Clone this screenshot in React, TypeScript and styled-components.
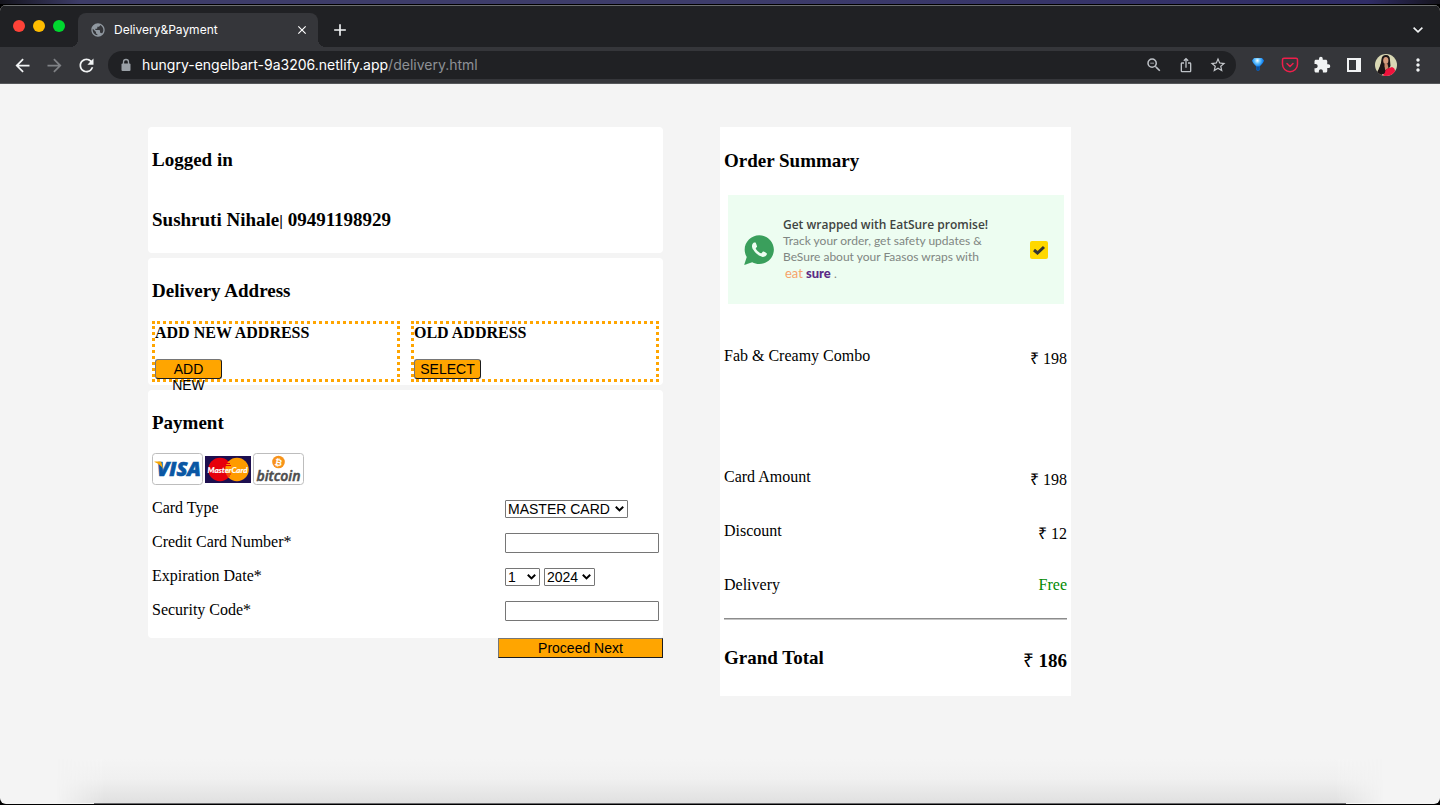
import React from "react";
import styled, { createGlobalStyle } from "styled-components";
import {
  MdAdd, MdArrowBack, MdArrowForward, MdClose, MdExtension,
  MdMoreVert, MdPublic, MdRefresh, MdStarBorder, MdZoomOut, MdIosShare,
} from "react-icons/md";
import { IoLogoWhatsapp } from "react-icons/io";
import { Pocket } from "lucide-react";

const GlobalStyle = createGlobalStyle`
  * { box-sizing: border-box; }
  body { margin: 0; background: #000; }
  h2, h3, p, dl, dd, dt { margin: 0; }
  button, input, select { margin: 0; font-family: "Liberation Sans", Arial, sans-serif; }
`;

const Desktop = styled.div`
  min-height: 100vh;
  display: flex;
  flex-direction: column;
  background: #000;
  font-family: "Liberation Serif", "Times New Roman", serif;
  font-size: 16px;
  color: #000;
`;

const Wallpaper = styled.div`
  height: 4px;
  margin-bottom: 1px;
  background: linear-gradient(90deg, #14141c 0, #3d3c68 80px, #3d3c6a 50%, #2f2c66 95%, #15141c 100%);
`;

const BrowserWindow = styled.div`
  flex: 1;
  display: flex;
  flex-direction: column;
  margin-bottom: 1px;
  border-radius: 6px;
  overflow: hidden;
  background: #f4f4f4;
`;

const TabBar = styled.div`
  height: 42px;
  display: flex;
  align-items: flex-end;
  padding: 0 6px 0 13px;
  border-top: 1px solid #6d6f70;
  background: #202124;
`;

const Lights = styled.div`
  display: flex;
  gap: 8px;
  margin-right: 13px;
  padding-bottom: 15px;
`;

const Light = styled.span<{ $color: string }>`
  width: 12px;
  height: 12px;
  border-radius: 50%;
  background: ${(p) => p.$color};
`;

const Tab = styled.div`
  position: relative;
  width: 240px;
  height: 34px;
  display: flex;
  align-items: center;
  gap: 8px;
  padding: 0 8px 0 12px;
  border-radius: 8px 8px 0 0;
  background: #35363a;
  color: #fff;
  font: 12px/16px Inter, sans-serif;

  &::before,
  &::after {
    content: "";
    position: absolute;
    bottom: 0;
    width: 8px;
    height: 8px;
  }
  &::before { left: -8px; background: radial-gradient(circle at 0 0, transparent 8px, #35363a 8px); }
  &::after { right: -8px; background: radial-gradient(circle at 100% 0, transparent 8px, #35363a 8px); }
`;

const TabTitle = styled.span`
  flex: 1;
`;

const TabButton = styled.button`
  width: 16px;
  height: 16px;
  display: flex;
  align-items: center;
  justify-content: center;
  padding: 0;
  border: 0;
  background: none;
  color: #fff;
`;

const BarButton = styled.button<{ $color?: string }>`
  width: 32px;
  height: 34px;
  display: flex;
  align-items: center;
  justify-content: center;
  flex: none;
  padding: 0;
  border: 0;
  background: none;
  color: ${(p) => p.$color ?? "#f1f3f4"};
`;

const NewTab = styled(BarButton)`
  margin: 0 auto 0 6px;
`;

const Toolbar = styled.div`
  height: 37px;
  display: flex;
  align-items: center;
  padding: 0 6px;
  border-bottom: 1px solid #55575a;
  background: #35363a;
`;

const Omnibox = styled.div`
  flex: 1;
  height: 28px;
  display: flex;
  align-items: center;
  margin: 0 6px;
  padding: 0 2px 0 12px;
  border-radius: 14px;
  background: #202124;
  color: #9aa0a6;
`;

const Address = styled.div`
  flex: 1;
  margin-left: 10px;
  font: 14px/20px Inter, sans-serif;
  color: #8e9196;

  b { font-weight: 400; color: #fff; }
`;

const Page = styled.main`
  flex: 1;
  display: grid;
  grid-template-columns: 515fr 351fr;
  align-items: start;
  gap: 57px;
  padding: 43px 369px 0 148px;
`;

const Dock = styled.div`
  height: 44px;
  margin: 0 56px;
  background: linear-gradient(180deg, #f4f4f4 0, #f0f0f0 45%, #e0e0e0 100%);
  mask-image: linear-gradient(90deg, transparent 0, #000 48px, #000 calc(100% - 48px), transparent 100%);
`;

const DockEdge = styled.div`
  height: 1px;
  margin: 0 94px;
  background: #6b6b6e;
`;

const Column = styled.form`
  display: flex;
  flex-direction: column;
  gap: 5px;
`;

const Panel = styled.section<{ $bottom: number }>`
  position: relative;
  padding: 22px 4px ${(p) => p.$bottom}px;
  border-radius: 4px;
  background: #fff;
`;

const Title = styled.h2`
  font-size: 19px;
  line-height: 22px;
  font-weight: 700;
`;

const Identity = styled(Title)`
  margin-top: 38px;
  span { font: 14px/16px "Liberation Sans", Arial, sans-serif; }
`;

const AddressGrid = styled.div`
  display: grid;
  grid-template-columns: 1fr 1fr;
  gap: 11px;
  margin-top: 19px;
`;

const AddressBox = styled.div`
  border: 3px dotted orange;
`;

const AddressHeading = styled.h3`
  margin-bottom: 17px;
  font-size: 16px;
  line-height: 18px;
`;

const ActionButton = styled.button`
  display: block;
  width: 67px;
  height: 20px;
  padding: 1px 4px;
  border: 1px solid;
  border-color: #767676 #1c1c1c #1c1c1c #767676;
  border-radius: 3px;
  background: orange;
  color: #000;
  font-size: 14px;
  line-height: 16px;
`;

const ProceedButton = styled(ActionButton)`
  width: 165px;
  margin: -5px 0 0 auto;
  border-radius: 0;
`;

const Cards = styled.div`
  display: flex;
  align-items: center;
  gap: 2px;
  margin: 19px 0 7px;
  svg { display: block; }
`;

const Field = styled.div`
  display: grid;
  grid-template-columns: 1fr 154px;
  align-items: center;
  height: 34px;
`;

const Label = styled.label`
  line-height: 18px;
  padding-bottom: 2px;
`;

const Controls = styled.div`
  display: flex;
  gap: 4px;
`;

const TextInput = styled.input`
  width: 100%;
  height: 20px;
  border: 1px solid #767676;
  border-radius: 1px;
  background: #fff;
`;

const SelectWrap = styled.span<{ $width: number }>`
  position: relative;
  width: ${(p) => p.$width}px;
  height: 18px;

  svg { position: absolute; right: 4px; top: 6px; pointer-events: none; }
`;

const Select = styled.select`
  appearance: none;
  display: block;
  width: 100%;
  height: 18px;
  padding: 0 2px;
  border: 1px solid #767676;
  border-radius: 1px;
  background: #fff;
  color: #000;
  font-size: 14px;
  line-height: 16px;
`;

const Summary = styled.section`
  padding: 23px 4px 21px;
  background: #fff;
`;

const Banner = styled.div`
  height: 109px;
  display: flex;
  align-items: center;
  margin: 23px 3px 43px 4px;
  padding: 0 16px 0 14px;
  background: #edfdf1;
  font-family: Lato, sans-serif;
  font-size: 12px;
  line-height: 16px;
  color: #808682;
`;

const BannerText = styled.label`
  flex: 1;
  margin-left: 7px;
  white-space: nowrap;

  strong { display: block; font: 600 12px/16px "Open Sans", sans-serif; color: #3f4441; }
`;

const Eat = styled.span`
  padding-left: 2px;
  font-size: 13px;
  color: #f7a26a;
`;

const Sure = styled.b`
  font-size: 13px;
  font-weight: 900;
  color: #5b2a86;
`;

const CheckWrap = styled.span`
  display: grid;
  > * { grid-area: 1 / 1; }
  svg { pointer-events: none; }
`;

const Check = styled.input`
  appearance: none;
  width: 18px;
  height: 18px;
  margin: 0;
  border-radius: 2px;
  background: #ffd800;
`;

const Line = styled.div<{ $top: number }>`
  display: flex;
  justify-content: space-between;
  margin-top: ${(p) => p.$top}px;
  line-height: 18px;

  dd { line-height: 24px; }
`;

const Free = styled.dd`
  && { line-height: 18px; padding-bottom: 4px; color: #008a00; }
`;

const Rule = styled.hr`
  height: 2px;
  margin: 20px 0 27px;
  border: 0;
  border-top: 1px solid #8c8c8c;
  border-bottom: 1px solid #c4c4c4;
`;

const Total = styled(Line)`
  font-size: 19px;
  font-weight: 700;
  line-height: 22px;

  dd { line-height: 28px; }
`;

const Rupee = styled.span`
  font-weight: 400;
`;

const Chevron = () => (
  <svg width="9" height="6" viewBox="0 0 9 6" fill="none" stroke="#000" strokeWidth="2">
    <path d="M.8 .8 4.5 4.4 8.2 .8" />
  </svg>
);

const LockIcon = () => (
  <svg width="12" height="14" viewBox="0 0 12 14">
    <path d="M3.500 6V4a2.500 2.500 0 0 1 5 0v2" fill="none" stroke="currentColor" strokeWidth="1.300" />
    <rect x="1.500" y="5.500" width="9" height="7.500" rx="1" fill="currentColor" />
  </svg>
);

const PinIcon = () => (
  <svg width="14" height="16" viewBox="0 0 14 16">
    <defs>
      <radialGradient id="gem" cx=".45" cy=".2" r=".6">
        <stop offset="0" stopColor="#fff" />
        <stop offset=".35" stopColor="#6cc8ff" />
        <stop offset=".8" stopColor="#0a7cf0" />
      </radialGradient>
    </defs>
    <path d="M1 3.500 3 1h8l2 2.500Q12.500 6 8.600 9.500V13L7 14l-1.600-1V9.500Q1.500 6 1 3.500Z" fill="url(#gem)" />
    <path d="M5.400 9.500h3.200V13L7 14l-1.600-1Z" fill="#0a4f9c" />
  </svg>
);

const AvatarIcon = () => (
  <svg width="22" height="22" viewBox="0 0 22 22">
    <clipPath id="face"><circle cx="11" cy="11" r="11" /></clipPath>
    <g clipPath="url(#face)">
      <rect width="22" height="22" fill="#d9d8b4" />
      <path d="M6.500 5Q7 1 11 1t4 5l.5 6-4 6-7 4-3-3Q6 12 6.500 5Z" fill="#1d1516" />
      <ellipse cx="10.800" cy="6.500" rx="2.600" ry="3.600" fill="#d59a7c" />
      <path d="M9.500 10h3l1 4-4 3Z" fill="#c98a6c" />
      <path d="M8 22q1-6 5-7.500l4-1.500q3 1 3 4v5Z" fill="#f0123c" />
      <path d="M6 10q3 1 4 5t-1.500 5L3 19Z" fill="#1d1516" />
    </g>
  </svg>
);

const VisaCard = () => (
  <svg width="51" height="32" viewBox="0 0 51 32" role="img" aria-label="Visa">
    <rect x=".5" y=".5" width="50" height="31" rx="3" fill="#fff" stroke="#bdbdbd" />
    <text x="5" y="23" fontFamily="Open Sans" fontSize="20" fontWeight="800" fontStyle="italic" fill="#0a57a4" stroke="#0a57a4" strokeWidth=".7">VISA</text>
    <path d="M2.500 8.500h5.500q1.200 0 1.500 1.300l1.500 6Q8 11 2.500 9Z" fill="#f7a600" />
  </svg>
);

const MasterCard = () => (
  <svg width="46" height="27" viewBox="0 0 46 27" role="img" aria-label="MasterCard">
    <rect width="46" height="27" fill="#1d0f4f" />
    <circle cx="15" cy="13.500" r="11.800" fill="#e6000c" />
    <circle cx="32" cy="13.500" r="11.800" fill="#ff9b00" />
    <path d="M21 7.500h4M20 9.500h6M20 18h6M21 20h4" stroke="#e6000c" strokeWidth="1" />
    <text x="22.500" y="16.500" textAnchor="middle" fontFamily="Lato" fontSize="8" fontWeight="700" fontStyle="italic" fill="#fff" stroke="#fff" strokeWidth=".2">MasterCard</text>
  </svg>
);

const BitcoinCard = () => (
  <svg width="51" height="32" viewBox="0 0 51 32" role="img" aria-label="Bitcoin">
    <rect x=".5" y=".5" width="50" height="31" rx="3" fill="#fff" stroke="#bdbdbd" />
    <circle cx="25.500" cy="9" r="6.300" fill="#f7931a" />
    <text x="25.500" y="12.500" textAnchor="middle" fontFamily="Liberation Sans" fontSize="9" fontWeight="700" fill="#fff" transform="rotate(12 25.500 9)">₿</text>
    <text x="25.500" y="28" textAnchor="middle" fontFamily="Open Sans" fontSize="14" fontWeight="600" fontStyle="italic" fill="#4d4d4d" stroke="#4d4d4d" strokeWidth=".5">bitcoin</text>
  </svg>
);

type PickProps = { id: string; label?: string; width: number; options: string[]; value: string };

const Pick = ({ id, label, width, options, value }: PickProps) => (
  <SelectWrap $width={width}>
    <Select id={id} aria-label={label} defaultValue={value}>
      {options.map((o) => <option key={o}>{o}</option>)}
    </Select>
    <Chevron />
  </SelectWrap>
);

const Amount = ({ value }: { value: number }) => <dd><Rupee>₹</Rupee> {value}</dd>;

export default function App() {
  return (
    <Desktop>
      <GlobalStyle />
      <Wallpaper />
      <BrowserWindow>
        <TabBar>
          <Lights><Light $color="#ff4238" /><Light $color="#ffbd00" /><Light $color="#00d82f" /></Lights>
          <Tab>
            <MdPublic size={16} color="#9098a0" />
            <TabTitle>Delivery&amp;Payment</TabTitle>
            <TabButton aria-label="Close tab"><MdClose size={14} /></TabButton>
          </Tab>
          <NewTab aria-label="New tab"><MdAdd size={20} /></NewTab>
          <BarButton aria-label="Search tabs">
            <svg width="10" height="6" viewBox="0 0 10 6" fill="none" stroke="currentColor" strokeWidth="1.600"><path d="m.6.6 4.400 4.200L9.400.6" /></svg>
          </BarButton>
        </TabBar>
        <Toolbar>
          <BarButton aria-label="Back"><MdArrowBack size={21} /></BarButton>
          <BarButton aria-label="Forward" $color="#7f8185"><MdArrowForward size={21} /></BarButton>
          <BarButton aria-label="Reload"><MdRefresh size={21} /></BarButton>
          <Omnibox>
            <LockIcon />
            <Address><b>hungry-engelbart-9a3206.netlify.app</b>/delivery.html</Address>
            <BarButton aria-label="Zoom" $color="#bdc1c6"><MdZoomOut size={18} /></BarButton>
            <BarButton aria-label="Share" $color="#bdc1c6"><MdIosShare size={16} /></BarButton>
            <BarButton aria-label="Bookmark" $color="#c4c7cb"><MdStarBorder size={18} /></BarButton>
          </Omnibox>
          <BarButton aria-label="Gem extension"><PinIcon /></BarButton>
          <BarButton aria-label="Pocket" $color="#ef1f4b"><Pocket size={18} strokeWidth={2} /></BarButton>
          <BarButton aria-label="Extensions"><MdExtension size={18} /></BarButton>
          <BarButton aria-label="Side panel">
            <svg width="14" height="14" viewBox="0 0 14 14"><path fill="currentColor" fillRule="evenodd" d="M0 0h14v14H0ZM2 2v10h7V2Z" /></svg>
          </BarButton>
          <BarButton aria-label="Profile"><AvatarIcon /></BarButton>
          <BarButton aria-label="Menu"><MdMoreVert size={20} /></BarButton>
        </Toolbar>
        <Page>
          <Column onSubmit={(e) => e.preventDefault()}>
            <Panel $bottom={22}>
              <Title>Logged in</Title>
              <Identity>Sushruti Nihale<span>|</span> 09491198929</Identity>
            </Panel>
            <Panel $bottom={3}>
              <Title>Delivery Address</Title>
              <AddressGrid>
                <AddressBox>
                  <AddressHeading>ADD NEW ADDRESS</AddressHeading>
                  <ActionButton type="button">ADD NEW</ActionButton>
                </AddressBox>
                <AddressBox>
                  <AddressHeading>OLD ADDRESS</AddressHeading>
                  <ActionButton type="button">SELECT</ActionButton>
                </AddressBox>
              </AddressGrid>
            </Panel>
            <Panel $bottom={10}>
              <Title>Payment</Title>
              <Cards><VisaCard /><MasterCard /><BitcoinCard /></Cards>
              <Field>
                <Label htmlFor="type">Card Type</Label>
                <Controls><Pick id="type" width={123} value="MASTER CARD" options={["MASTER CARD", "VISA", "BITCOIN"]} /></Controls>
              </Field>
              <Field>
                <Label htmlFor="number">Credit Card Number*</Label>
                <Controls><TextInput id="number" /></Controls>
              </Field>
              <Field>
                <Label htmlFor="month">Expiration Date*</Label>
                <Controls>
                  <Pick id="month" width={35} value="1" options={["1", "2", "3", "4", "5", "6", "7", "8", "9", "10", "11", "12"]} />
                  <Pick id="year" label="Expiration year" width={51} value="2024" options={["2024", "2025", "2026"]} />
                </Controls>
              </Field>
              <Field>
                <Label htmlFor="code">Security Code*</Label>
                <Controls><TextInput id="code" /></Controls>
              </Field>
            </Panel>
            <ProceedButton type="submit">Proceed Next</ProceedButton>
          </Column>
          <Summary>
            <Title>Order Summary</Title>
            <Banner>
              <IoLogoWhatsapp size={34} color="#3a9f5c" />
              <BannerText htmlFor="updates">
                <strong>Get wrapped with EatSure promise!</strong>
                Track your order, get safety updates &amp;<br />
                BeSure about your Faasos wraps with<br />
                <Eat>eat</Eat> <Sure>sure</Sure> .
              </BannerText>
              <CheckWrap>
                <Check id="updates" type="checkbox" defaultChecked />
                <svg width="18" height="18" viewBox="0 0 18 18" fill="none" stroke="#333" strokeWidth="3"><path d="m4 9 3.500 3L14 6" /></svg>
              </CheckWrap>
            </Banner>
            <dl>
              <Line $top={0}><dt>Fab &amp; Creamy Combo</dt><Amount value={198} /></Line>
              <Line $top={97}><dt>Card Amount</dt><Amount value={198} /></Line>
              <Line $top={30}><dt>Discount</dt><Amount value={12} /></Line>
              <Line $top={30}><dt>Delivery</dt><Free>Free</Free></Line>
            </dl>
            <Rule />
            <dl>
              <Total $top={0}><dt>Grand Total</dt><Amount value={186} /></Total>
            </dl>
          </Summary>
        </Page>
        <Dock />
        <DockEdge />
      </BrowserWindow>
    </Desktop>
  );
}
